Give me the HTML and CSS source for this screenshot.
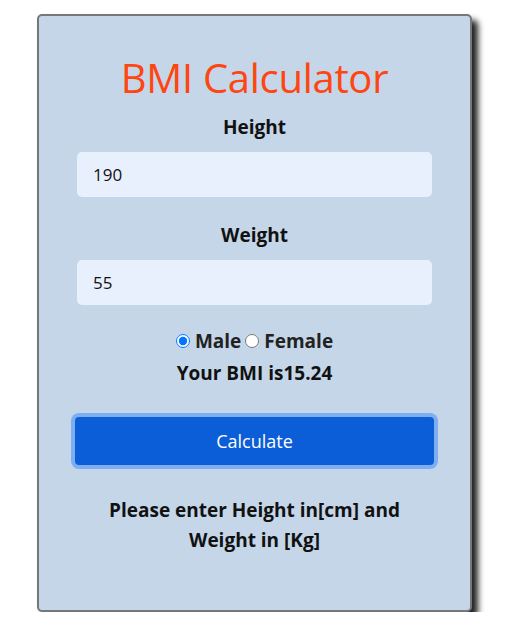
FILE: index.html
```html
<!DOCTYPE html>
<html>
<head>
<meta charset="utf-8">
<link rel="stylesheet" href="styles.css">
</head>
<body>
<div class="card">
  <h1 class="title">BMI Calculator</h1>
  <label class="label">Height</label>
  <input class="field" type="text" value="190">
  <label class="label label-weight">Weight</label>
  <input class="field" type="text" value="55">
  <div class="gender">
    <input type="radio" name="g" checked><span>Male</span>
    <input type="radio" name="g"><span>Female</span>
  </div>
  <div class="result">Your BMI is15.24</div>
  <div class="btnwrap"><button class="btn">Calculate</button></div>
  <p class="note">Please enter Height in[cm] and<br>Weight in [Kg]</p>
</div>
</body>
</html>
```
FILE: styles.css
```css
* { box-sizing: border-box; }
body {
  margin: 0;
  background: #fff;
  font-family: "Open Sans", "Noto Sans", sans-serif;
}
.card {
  margin: 14px 0 0 37px;
  width: 435px;
  height: 598px;
  background: #c4d6e8;
  border: 2px solid #777;
  border-radius: 5px;
  box-shadow: 6px 6px 6px #222;
  display: flex;
  flex-direction: column;
  align-items: center;
  padding: 0 38px;
}
.title {
  margin: 37px 0 0;
  font-size: 40px;
  font-weight: 400;
  color: #ff4511;
  line-height: 50px;
  letter-spacing: -0.3px;
}
.label {
  font-weight: 700;
  font-size: 19px;
  line-height: 24px;
  margin-top: 12px;
  color: #111;
}
.label-weight { margin-top: 26px; }
.field {
  width: 355px;
  height: 45px;
  margin-top: 13px;
  border: none;
  border-radius: 5px;
  background: #e8f0fe;
  font-family: inherit;
  font-size: 17px;
  padding: 0 16px;
  color: #111;
}
.gender {
  margin-top: 24px;
  display: flex;
  align-items: center;
  font-weight: 700;
  font-size: 19px;
  line-height: 24px;
  color: #222;
}
.gender input { margin: 0 5px 0 0; width: 14px; height: 14px; }
.gender span + input { margin-left: 4px; }
.result {
  margin-top: 8px;
  font-weight: 700;
  font-size: 19px;
  line-height: 24px;
  color: #111;
}
.btnwrap {
  margin-top: 28px;
  padding: 4px;
  border-radius: 8px;
  background: #7eaef2;
}
.btn {
  display: block;
  width: 359px;
  height: 48px;
  border: none;
  border-radius: 4px;
  background: #0b5ed7;
  color: #fff;
  font-family: inherit;
  font-size: 18px;
}
.note {
  margin: 26px 0 0;
  text-align: center;
  font-weight: 700;
  font-size: 19px;
  line-height: 30px;
  color: #111;
}
```
